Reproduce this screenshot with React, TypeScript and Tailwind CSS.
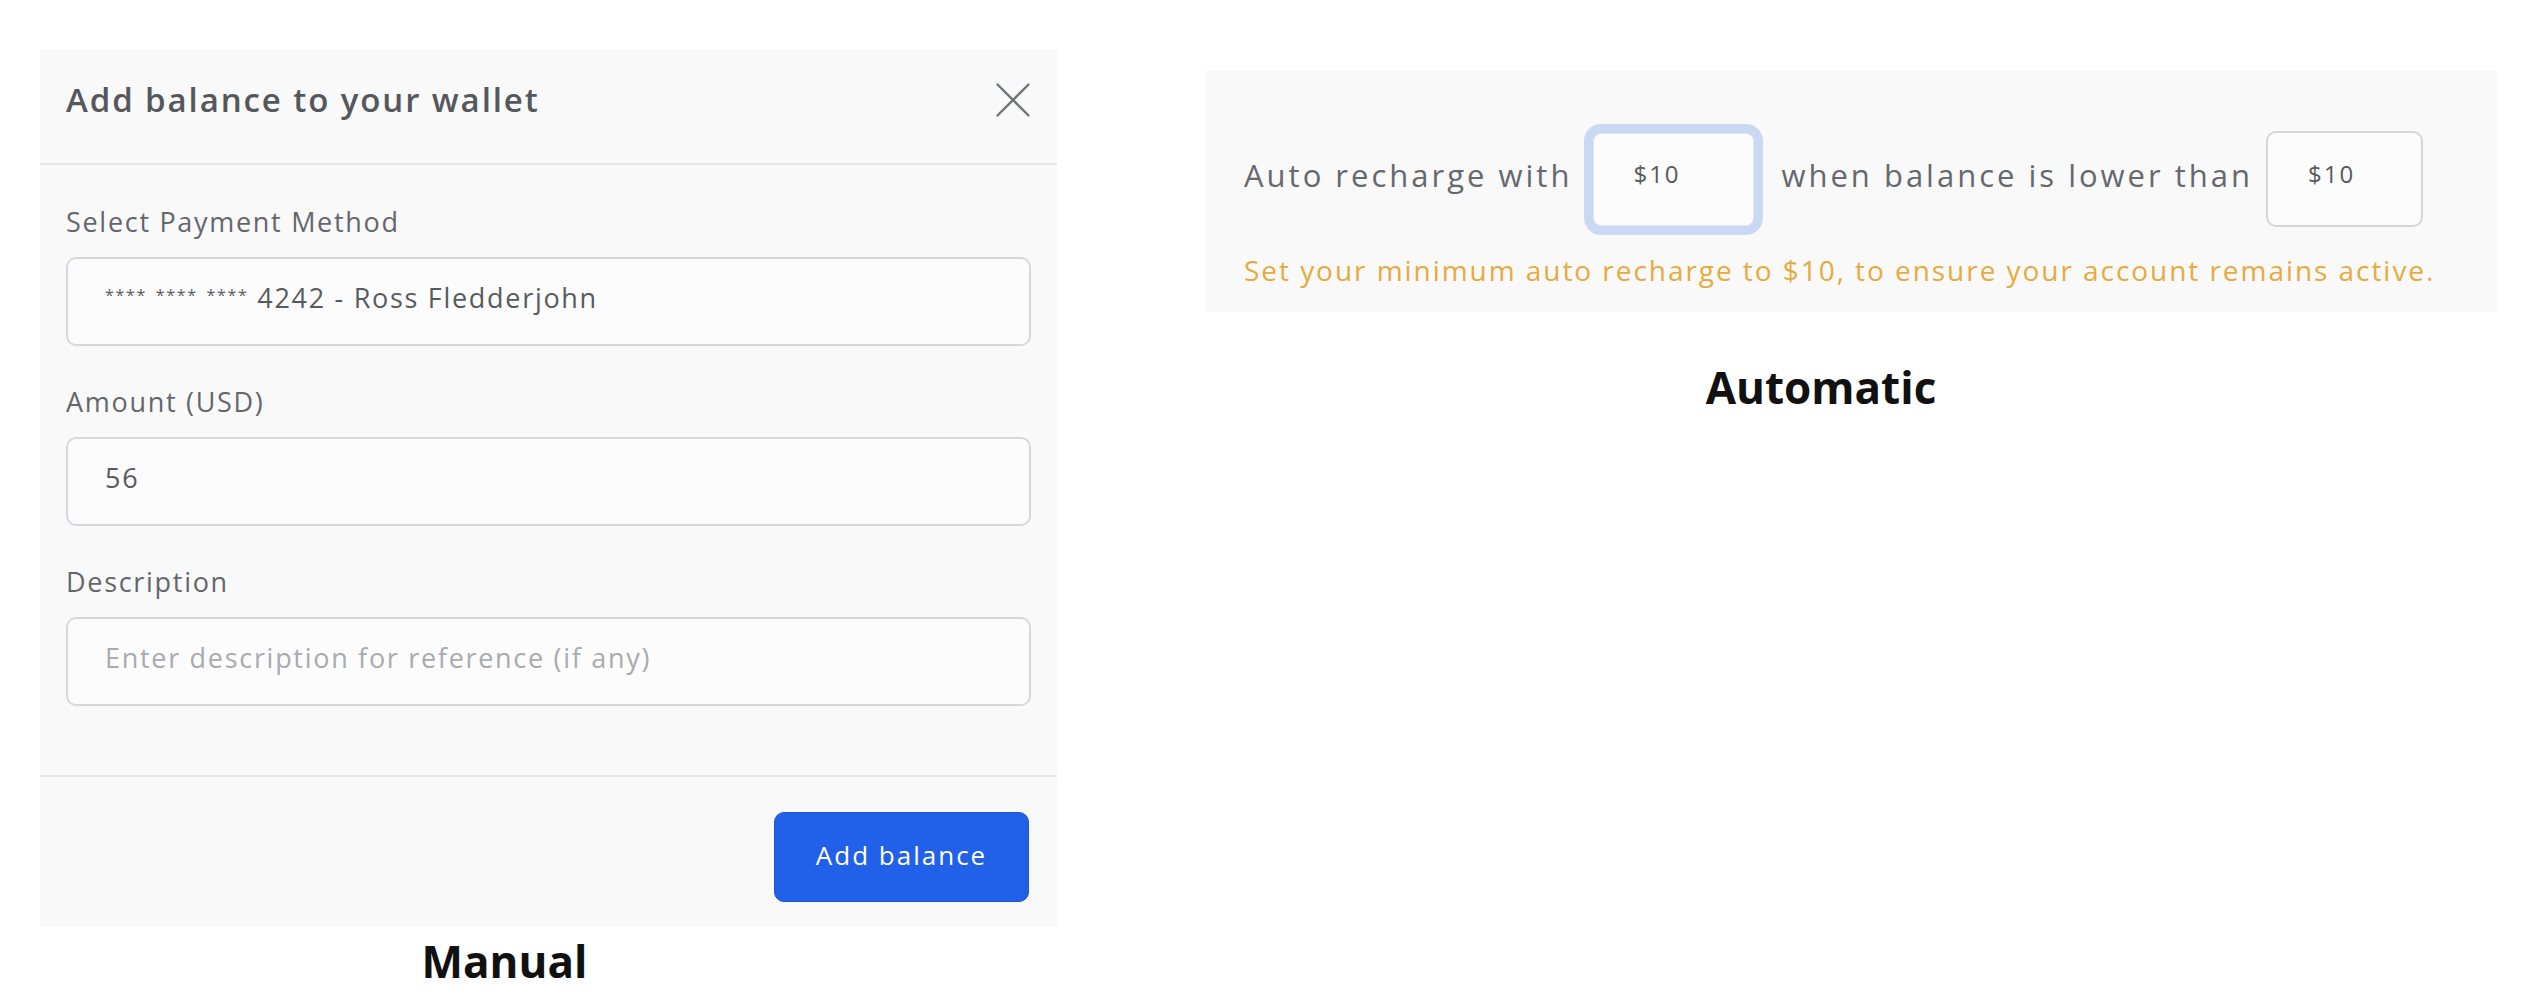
import React from 'react';

// Manual / automatic top-up panels, side by side
function Stars() {
  return <span className="text-[16px] tracking-[1.7px] align-[7px]">****</span>;
}

function CloseIcon() {
  return (
    <svg width="34" height="34" viewBox="0 0 34 34" fill="none">
      <path d="M1.5 1.5 32.5 32.5M32.5 1.5 1.5 32.5" stroke="#707378" strokeWidth="2.4" strokeLinecap="round" />
    </svg>
  );
}

function Field({ label, children }: { label: string; children: React.ReactNode }) {
  return (
    <div className="flex flex-col">
      <div className="h-[36px] leading-[36px] text-[27px] tracking-[1.7px] text-[#63676c]">{label}</div>
      <div className="mt-[17px] h-[89px] rounded-[10px] border-2 border-[#d6d8db] bg-[#fcfcfc] pl-[37px] pb-[6px] flex items-center text-[27px] tracking-[1.7px]">
        {children}
      </div>
    </div>
  );
}

export default function App() {
  return (
    <div className="min-h-screen bg-white font-['Open_Sans',sans-serif] flex items-start pl-[40px] pt-[49px]">
      {/* Manual */}
      <div className="w-[1017px] flex flex-col">
        <div className="h-[878px] bg-[#f9f9f9] flex flex-col">
          <div className="h-[116px] shrink-0 px-[26px] pr-[27px] pb-[13px] border-b-2 border-[#e6e7e9] flex items-center justify-between">
            <h2 className="text-[33px] font-semibold tracking-[1.9px] text-[#54585d]">Add balance to your wallet</h2>
            <CloseIcon />
          </div>

          <div className="flex-1 px-[26px] pt-[39px] flex flex-col gap-[38px]">
            <Field label="Select Payment Method">
              <span className="text-[#575b60] whitespace-pre">
                <Stars /> <Stars /> <Stars /> 4242 - Ross Fledderjohn
              </span>
            </Field>
            <Field label="Amount (USD)">
              <span className="text-[#575b60]">56</span>
            </Field>
            <Field label="Description">
              <span className="text-[#a8abaf]">Enter description for reference (if any)</span>
            </Field>
          </div>

          <div className="h-[152px] shrink-0 border-t-2 border-[#e6e7e9] flex justify-end items-start pt-[35px] pr-[28px]">
            <button className="w-[255px] h-[90px] rounded-[10px] bg-[#2161e9] border border-[#1c56d4] pb-[4px] text-white text-[26px] font-medium tracking-[2px]">
              Add balance
            </button>
          </div>
        </div>
        <div className="pr-[88px] text-center text-[44px] font-bold leading-[60px] mt-[4px] text-[#111]">Manual</div>
      </div>

      {/* Automatic */}
      <div className="ml-[149px] mt-[22px] w-[1291px] flex flex-col">
        <div className="h-[241px] bg-[#f9f9f9] pl-[38px] pt-[60px]">
          <div className="h-[96px] flex items-center text-[31px] tracking-[3px] text-[#65696e]">
            <span className="pb-[8px]">Auto recharge with</span>
            <div className="ml-[21px] w-[161px] h-[93px] rounded-[8px] border border-[#dfe7f7] ring-[9px] ring-[#c9d8f3] bg-[#fcfcfc] pl-[39px] pb-[10px] flex items-center text-[24px] tracking-[2px] text-[#555a5f]">
              $10
            </div>
            <span className="ml-[27px] pb-[8px]">when balance is lower than</span>
            <div className="ml-[13px] w-[157px] h-[96px] rounded-[10px] border-2 border-[#d4d6d9] bg-[#fcfcfc] pl-[40px] pb-[10px] flex items-center text-[24px] tracking-[2px] text-[#555a5f]">
              $10
            </div>
          </div>
          <p className="mt-[25px] leading-[36px] text-[28px] tracking-[1.95px] text-[#e8aa3e]">
            Set your minimum auto recharge to $10, to ensure your account remains active.
          </p>
        </div>
        <div className="pr-[61px] text-center text-[44px] font-bold leading-[60px] mt-[45px] text-[#111]">Automatic</div>
      </div>
    </div>
  );
}
